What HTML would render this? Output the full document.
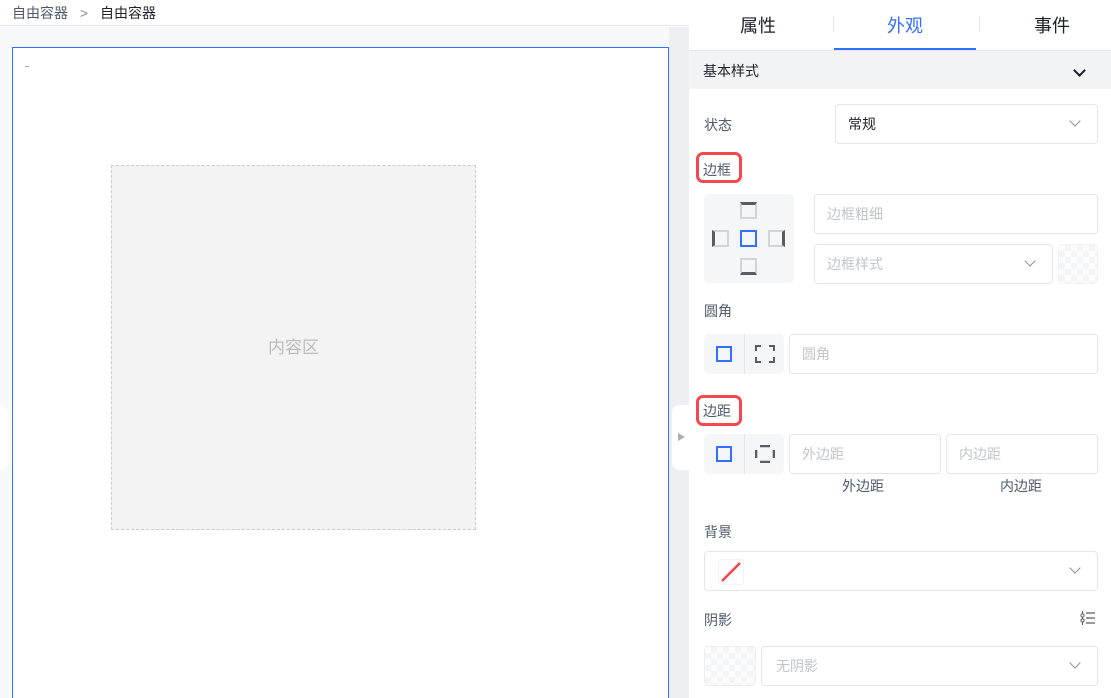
<!DOCTYPE html>
<html style="width:1111px;height:698px;overflow:hidden"><head><meta charset="utf-8"><style>
*{box-sizing:border-box;margin:0;padding:0}
body{width:1111px;height:698px;overflow:hidden;position:relative;background:#fff;font-family:"Liberation Sans","Noto Sans CJK SC",sans-serif;font-size:14px;color:#1d2129}
.a{position:absolute}
.inp{position:absolute;border:1px solid #e5e6eb;border-radius:4px;background:#fff;color:#c0c4cc;font-size:14px;line-height:38px;padding-left:12px}
.chev{position:absolute;width:8px;height:8px;border-right:1.3px solid #86909c;border-bottom:1.3px solid #86909c;transform:rotate(45deg)}
.lbl{position:absolute;font-size:14px;color:#4e5969}
.chk{background-color:#fcfcfd;background-image:linear-gradient(45deg,#f4f5f7 25%,transparent 25%,transparent 75%,#f4f5f7 75%),linear-gradient(45deg,#f4f5f7 25%,transparent 25%,transparent 75%,#f4f5f7 75%);background-size:12px 12px;background-position:0 0,6px 6px}
.bx{position:absolute;width:17px;height:17px;border:2px solid #d4d4d6}
</style></head><body>
<div class="a" style="left:0;top:0;width:689px;height:26px;background:#fff;border-bottom:1px solid #e5e6eb"></div>
<div class="a" style="left:12px;top:3px;font-size:14px;color:#4e5969">自由容器 <span style="margin:0 8px;color:#86909c">&gt;</span> <span style="color:#1d2129">自由容器</span></div>
<div class="a" style="left:0;top:27px;width:689px;height:671px;background:#f7f8fa"></div>
<div class="a" style="left:669px;top:27px;width:20px;height:671px;background:#eeeff2"></div>
<div class="a" style="left:0;top:405px;width:8px;height:65px;background:#fff;border-radius:0 8px 8px 0"></div>
<div class="a" style="left:12px;top:47px;width:657px;height:651px;background:#fff;border:1px solid #3370ff;border-bottom:none"></div>
<div class="a" style="left:25px;top:66px;width:4px;height:1px;background:#aaa"></div>
<div class="a" style="left:111px;top:165px;width:365px;height:365px;background:#f3f3f3;border:1px dashed #ccc;color:#bbb;font-size:17px;text-align:center;line-height:363px">内容区</div>
<div class="a" style="left:672px;top:405px;width:20px;height:65px;background:#fff;border-radius:8px 0 0 8px"></div>
<div class="a" style="left:678px;top:433px;width:0;height:0;border-left:7px solid #a9aeb8;border-top:4.5px solid transparent;border-bottom:4.5px solid transparent"></div>
<div class="a" style="left:689px;top:0;width:422px;height:698px;background:#fff"></div>
<div class="a" style="left:689px;top:50px;width:422px;height:1px;background:#e5e6eb"></div>
<div class="a" style="left:740px;top:12px;font-size:18px">属性</div>
<div class="a" style="left:887px;top:12px;font-size:18px;color:#3370ff">外观</div>
<div class="a" style="left:1034px;top:12px;font-size:18px">事件</div>
<div class="a" style="left:833px;top:16px;width:1px;height:16px;background:#e5e6eb"></div>
<div class="a" style="left:979px;top:16px;width:1px;height:16px;background:#e5e6eb"></div>
<div class="a" style="left:834px;top:48px;width:142px;height:2px;background:#3370ff"></div>
<div class="a" style="left:689px;top:51px;width:422px;height:38px;background:#f2f3f5"></div>
<div class="a" style="left:703px;top:61px;font-size:14px">基本样式</div>
<div class="a" style="left:1075px;top:66px;width:9px;height:9px;border-right:2px solid #1d2129;border-bottom:2px solid #1d2129;transform:rotate(45deg)"></div>

<div class="lbl" style="left:704px;top:115px">状态</div>
<div class="inp" style="left:835px;top:104px;width:263px;height:40px;color:#1d2129">常规</div>
<div class="chev" style="left:1071px;top:117px"></div>

<div class="a" style="left:696px;top:152px;width:46px;height:31px;border:3.5px solid #f5484e;border-radius:7px"></div>
<div class="lbl" style="left:703px;top:160px;color:#4e5969">边框</div>
<div class="a" style="left:704px;top:194px;width:90px;height:89px;background:#f5f6f8;border-radius:5px"></div>
<div class="bx" style="left:740px;top:202px;border-top:3px solid #595c63"></div>
<div class="bx" style="left:712px;top:230px;border-left:3px solid #595c63"></div>
<div class="bx" style="left:740px;top:230px;border-color:#3370ff"></div>
<div class="bx" style="left:768px;top:230px;border-right:3px solid #595c63"></div>
<div class="bx" style="left:740px;top:258px;border-bottom:3px solid #595c63"></div>
<div class="inp" style="left:814px;top:194px;width:284px;height:40px">边框粗细</div>
<div class="inp" style="left:814px;top:244px;width:239px;height:40px">边框样式</div>
<div class="chev" style="left:1026px;top:257px"></div>
<div class="a chk" style="left:1058px;top:244px;width:40px;height:40px;border-radius:4px;border:1px solid #f2f3f5"></div>

<div class="lbl" style="left:704px;top:301px">圆角</div>
<div class="a" style="left:704px;top:334px;width:80px;height:40px;background:#f5f6f8;border-radius:5px"></div>
<div class="a" style="left:744px;top:334px;width:1px;height:40px;background:#e5e6eb"></div>
<div class="a" style="left:716px;top:346px;width:16px;height:16px;border:2px solid #3370ff"></div>
<svg class="a" style="left:755px;top:345px" width="20" height="18" viewBox="0 0 20 18"><path d="M1 6V1H6M14 1H19V6M19 12V17H14M6 17H1V12" fill="none" stroke="#595c63" stroke-width="2"/></svg>
<div class="inp" style="left:789px;top:334px;width:309px;height:40px">圆角</div>

<div class="a" style="left:696px;top:395px;width:46px;height:31px;border:3.5px solid #f5484e;border-radius:7px"></div>
<div class="lbl" style="left:703px;top:401px">边距</div>
<div class="a" style="left:704px;top:434px;width:80px;height:40px;background:#f5f6f8;border-radius:5px"></div>
<div class="a" style="left:744px;top:434px;width:1px;height:40px;background:#e5e6eb"></div>
<div class="a" style="left:716px;top:446px;width:16px;height:16px;border:2px solid #3370ff"></div>
<svg class="a" style="left:755px;top:445px" width="20" height="18" viewBox="0 0 20 18"><path d="M5 1H15M5 17H15M1 5V13M19 5V13" fill="none" stroke="#595c63" stroke-width="2.6"/></svg>
<div class="inp" style="left:789px;top:434px;width:152px;height:40px">外边距</div>
<div class="inp" style="left:946px;top:434px;width:152px;height:40px">内边距</div>
<div class="a" style="left:842px;top:476px;font-size:14px;color:#4e5969">外边距</div>
<div class="a" style="left:1000px;top:476px;font-size:14px;color:#4e5969">内边距</div>

<div class="lbl" style="left:704px;top:522px">背景</div>
<div class="inp" style="left:704px;top:551px;width:394px;height:40px"></div>
<div class="a" style="left:718px;top:559px;width:26px;height:26px;border:1px solid #f2f3f5;border-radius:3px;background:#fff"></div>
<svg class="a" style="left:718px;top:559px" width="26" height="26"><path d="M4 22L22 4" stroke="#f5424b" stroke-width="2.5"/></svg>
<div class="chev" style="left:1071px;top:564px"></div>

<div class="lbl" style="left:704px;top:610px">阴影</div>
<svg class="a" style="left:1080px;top:610px" width="16" height="16" viewBox="0 0 16 16"><path d="M6 3H15M6 8H15M6 13H15" stroke="#595c63" stroke-width="1.3"/><circle cx="2.5" cy="5.5" r="1.6" fill="none" stroke="#595c63" stroke-width="1"/><circle cx="2.5" cy="10.5" r="1.6" fill="none" stroke="#595c63" stroke-width="1"/><path d="M2.5 1V4M2.5 7V9M2.5 12V15" stroke="#595c63" stroke-width="1"/></svg>
<div class="a chk" style="left:704px;top:646px;width:52px;height:40px;border-radius:4px;border:1px solid #eee"></div>
<div class="inp" style="left:761px;top:646px;width:337px;height:40px;padding-left:14px">无阴影</div>
<div class="chev" style="left:1071px;top:659px"></div>
</body></html>
